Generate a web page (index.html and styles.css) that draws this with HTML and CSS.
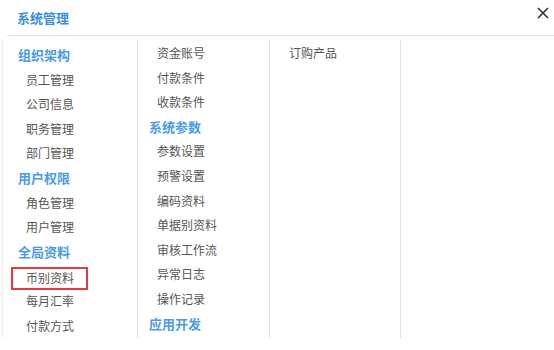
FILE: index.html
```html
<!DOCTYPE html>
<html lang="zh-CN">
<head>
    <meta charset="UTF-8">
    <meta name="viewport" content="width=device-width, initial-scale=1.0">
    <title>系统管理</title>
    <link rel="stylesheet" href="styles.css">
</head>
<body>
    <div class="dialog">
        <div class="dialog-header">
            <h2>系统管理</h2>
            <span class="close">
                <svg width="12" height="12" viewBox="0 0 12 12">
                    <path d="M1 1 L11 11 M11 1 L1 11" stroke="#333" stroke-width="1.6" fill="none"/>
                </svg>
            </span>
        </div>
        <div class="dialog-body">
            <div class="menu-col col-a">
                <div class="cat">组织架构</div>
                <div class="item">员工管理</div>
                <div class="item">公司信息</div>
                <div class="item">职务管理</div>
                <div class="item">部门管理</div>
                <div class="cat">用户权限</div>
                <div class="item">角色管理</div>
                <div class="item">用户管理</div>
                <div class="cat">全局资料</div>
                <div class="item selected">币别资料</div>
                <div class="item">每月汇率</div>
                <div class="item">付款方式</div>
            </div>
            <div class="menu-col col-b">
                <div class="item">资金账号</div>
                <div class="item">付款条件</div>
                <div class="item">收款条件</div>
                <div class="cat">系统参数</div>
                <div class="item">参数设置</div>
                <div class="item">预警设置</div>
                <div class="item">编码资料</div>
                <div class="item">单据别资料</div>
                <div class="item">审核工作流</div>
                <div class="item">异常日志</div>
                <div class="item">操作记录</div>
                <div class="cat">应用开发</div>
            </div>
            <div class="menu-col col-c">
                <div class="item">订购产品</div>
            </div>
        </div>
    </div>
</body>
</html>
```

FILE: styles.css
```css
/* dialog layout */
body {
    margin: 0;
    padding: 0;
    background-color: #fff;
    font-family: "Microsoft YaHei", "Noto Sans CJK SC", sans-serif;
}
.dialog {
    width: 554px;
    height: 350px;
    background-color: #fff;
}
.dialog-header {
    display: flex;
    align-items: center;
    justify-content: space-between;
    height: 35px;
    margin-left: 7px;
    border-bottom: 1px solid #e2e2e2;
}
.dialog-header h2 {
    margin: 0 0 0 10px;
    font-size: 13px;
    font-weight: bold;
    color: #3b8fd9;
    line-height: 36px;
}
.close {
    display: flex;
    align-self: flex-start;
    margin-top: 7px;
    margin-right: 5px;
    cursor: pointer;
}
.dialog-body {
    display: grid;
    grid-template-columns: 131px 132px 131px;
    margin-top: 4px;
    margin-left: 2px;
    padding-left: 4px;
    height: 298px;
    border-left: 1px solid #ececec;
}
.menu-col {
    box-sizing: border-box;
    padding-left: 11px;
    border-right: 1px solid #e0e0e0;
}
.col-a {
    padding-top: 3px;
}
.col-b {
    padding-top: 1px;
}
.col-c {
    padding-top: 1px;
}
.cat {
    font-size: 13px;
    font-weight: bold;
    color: #4a9be3;
    line-height: 24.6px;
    height: 24.6px;
}
.item {
    font-size: 12px;
    color: #555;
    line-height: 24.6px;
    height: 24.6px;
    padding-left: 8px;
}
.item.selected {
    box-sizing: border-box;
    width: 77px;
    height: 23px;
    margin: 3px 0 -1.4px -7px;
    padding-left: 13px;
    border: 2px solid #e53a3e;
    line-height: 18px;
}
```
